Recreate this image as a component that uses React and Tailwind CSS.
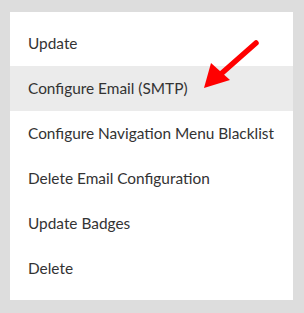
import React from 'react';

const items = [
    'Update',
    'Configure Email (SMTP)',
    'Configure Navigation Menu Blacklist',
    'Delete Email Configuration',
    'Update Badges',
    'Delete',
];

const App = () => {
    return (
        <div className="w-[304px] h-[313px] bg-[#dddddd] pt-[12px] pl-[10px] font-['Lato',sans-serif]">
            <div className="relative w-[283px] bg-white py-[9px]">
                <ul>
                    {items.map((item, i) => (
                        <li
                            key={item}
                            className={`h-[45px] flex items-center pl-[18px] text-[15.4px] text-[#333333] ${i === 1 ? 'bg-[#ebebeb]' : ''}`}
                        >
                            {item}
                        </li>
                    ))}
                </ul>
                {/* red pointer arrow */}
                <svg className="absolute left-0 top-0" width="283" height="120" viewBox="0 0 283 120">
                    <line x1="246" y1="31" x2="212" y2="61" stroke="#ff0000" strokeWidth="5.5" strokeLinecap="round" />
                    <polygon points="194,76 201,51 220,68" fill="#ff0000" />
                </svg>
            </div>
        </div>
    );
};

export default App;
